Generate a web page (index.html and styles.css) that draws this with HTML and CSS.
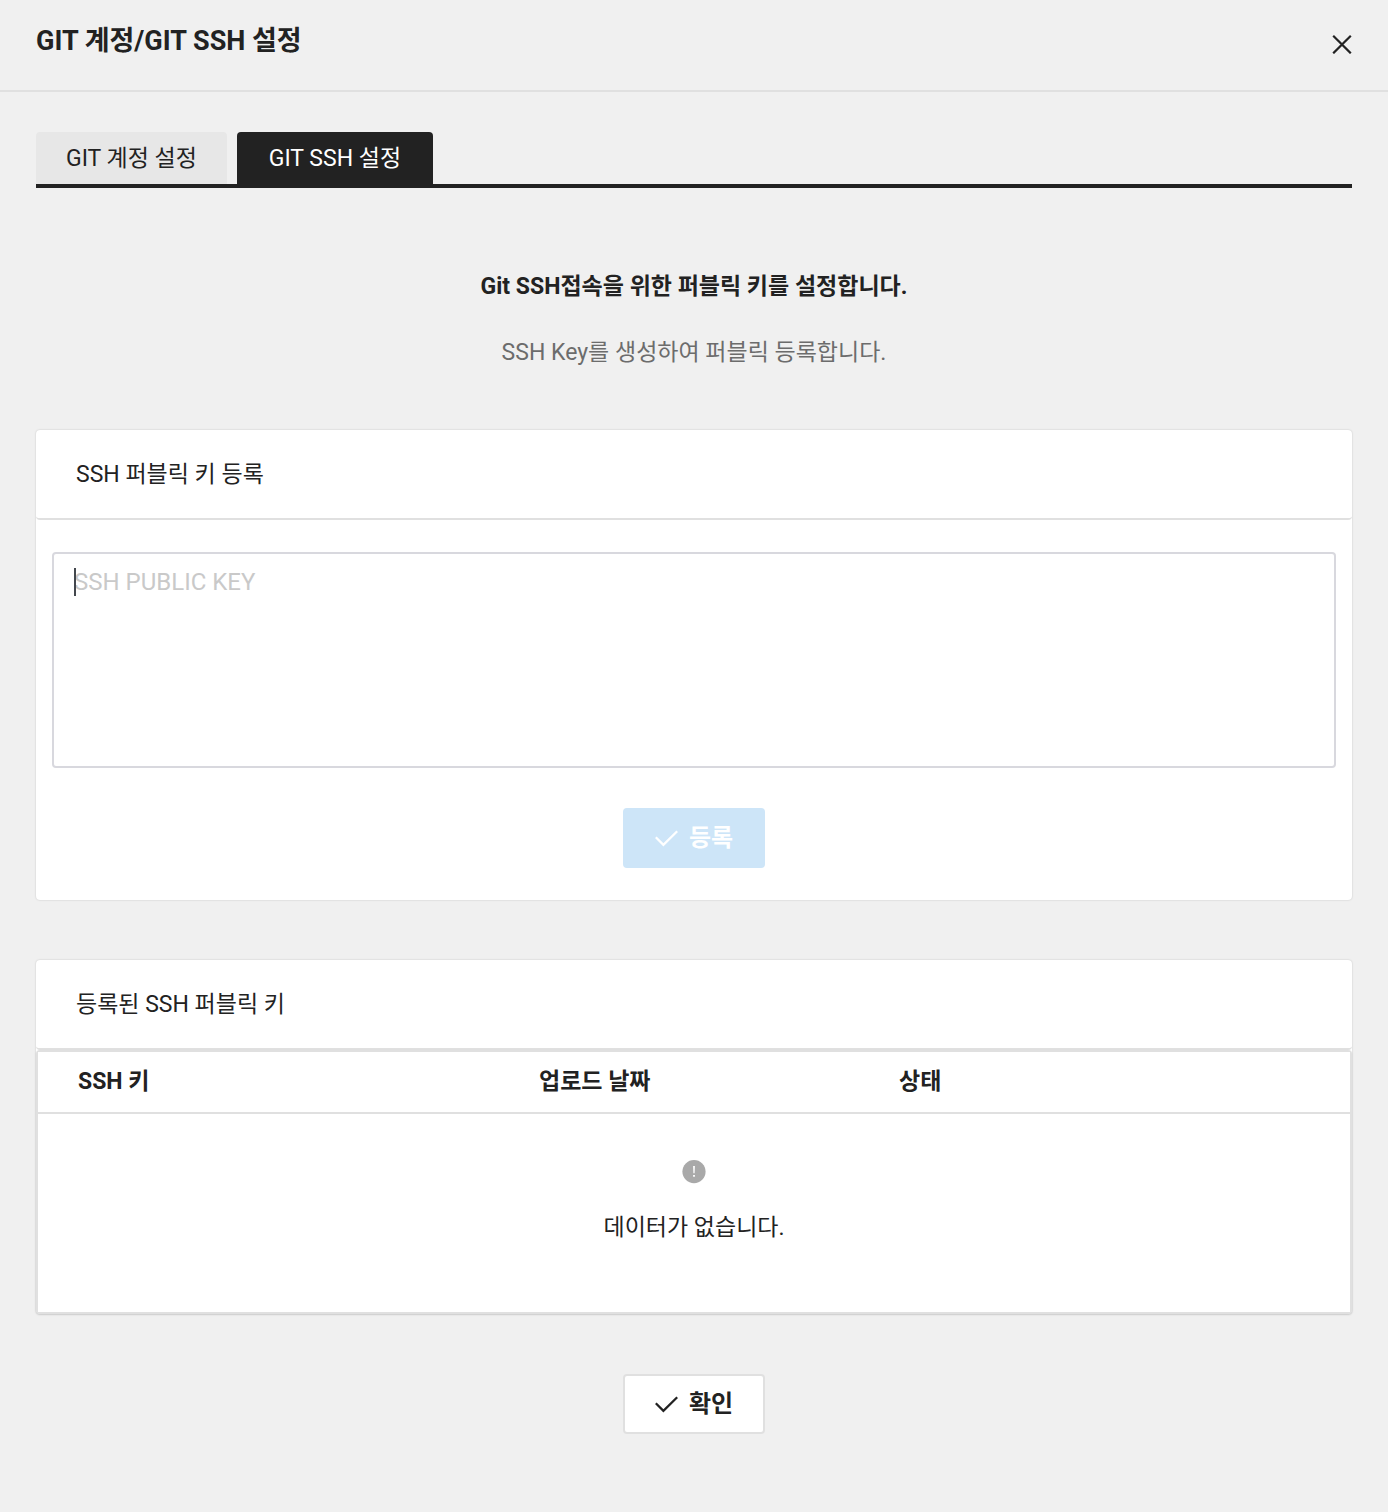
FILE: index.html
```html
<!DOCTYPE html>
<html lang="ko">
<head>
<meta charset="utf-8">
<meta name="viewport" content="width=device-width, initial-scale=1">
<title>GIT 계정/GIT SSH 설정</title>
<link rel="stylesheet" href="styles.css">
</head>
<body>
<header class="dialog-header">
  <h1 class="dialog-title">GIT 계정/GIT SSH 설정</h1>
  <button class="close-button" type="button" aria-label="닫기">
    <svg width="20" height="20" viewBox="0 0 20 20" fill="none" stroke="currentColor" stroke-width="2.2" aria-hidden="true"><path d="M1.2 1.7 18.8 19.3M18.8 1.7 1.2 19.3"/></svg>
  </button>
</header>
<main class="dialog-body">
  <div class="tabs" role="tablist">
    <button class="tab" type="button" role="tab" aria-selected="false">GIT 계정 설정</button>
    <button class="tab tab-active" type="button" role="tab" aria-selected="true">GIT SSH 설정</button>
  </div>

  <div class="intro">
    <p class="intro-title">Git SSH접속을 위한 퍼블릭 키를 설정합니다.</p>
    <p class="intro-text">SSH Key를 생성하여 퍼블릭 등록합니다.</p>
  </div>

  <section class="card">
    <h2 class="card-title"><label for="public-key">SSH 퍼블릭 키 등록</label></h2>
    <form class="key-form">
      <div class="key-field">
        <textarea id="public-key" class="key-input" placeholder="SSH PUBLIC KEY"></textarea>
        <span class="caret" aria-hidden="true"></span>
      </div>
      <button class="button button-primary" type="submit" disabled>
        <svg class="check" width="24" height="24" viewBox="0 0 24 24" fill="none" stroke="currentColor" stroke-width="2.3" aria-hidden="true"><path d="M.8 11.2 8.4 18.8 22.2 5.2"/></svg>
        <span>등록</span>
      </button>
    </form>
  </section>

  <section class="card">
    <h2 class="card-title">등록된 SSH 퍼블릭 키</h2>
    <div class="key-list">
      <table class="key-table">
        <thead>
          <tr><th class="col-key" scope="col">SSH 키</th><th class="col-date" scope="col">업로드 날짜</th><th scope="col">상태</th></tr>
        </thead>
        <tbody>
          <tr>
            <td colspan="3">
              <div class="empty">
                <svg width="24" height="24" viewBox="0 0 24 24" aria-hidden="true"><circle cx="12" cy="11.6" r="11.6" fill="#a9a9a9"/><path d="M11.1 6.1h1.8l-.3 7.2h-1.2zM11.1 14.9h1.8v1.8h-1.8z" fill="#fff"/></svg>
                <span>데이터가 없습니다.</span>
              </div>
            </td>
          </tr>
        </tbody>
      </table>
    </div>
  </section>

  <div class="actions">
    <button class="button button-outline" type="button">
      <svg class="check" width="24" height="24" viewBox="0 0 24 24" fill="none" stroke="currentColor" stroke-width="2.3" aria-hidden="true"><path d="M.8 11.2 8.4 18.8 22.2 5.2"/></svg>
      <span>확인</span>
    </button>
  </div>
</main>
</body>
</html>
```
FILE: styles.css
```css
* {
  box-sizing: border-box;
}

body {
  margin: 0;
  background: #f0f0f0;
  color: #222;
  font-family: Roboto, "Noto Sans CJK KR", sans-serif;
  font-size: 23px;
  line-height: 32px;
}

h1, h2, p {
  margin: 0;
}

button, textarea {
  font: inherit;
  color: inherit;
}

.dialog-header {
  display: flex;
  justify-content: space-between;
  align-items: flex-start;
  padding: 25px 36px 33px;
  border-bottom: 2px solid #e0e0e0;
}

.dialog-title {
  font-size: 27px;
  font-weight: 700;
  line-height: 32px;
}

.close-button {
  display: flex;
  padding: 9px 0 0;
  border: 0;
  background: none;
}

.dialog-body {
  padding: 40px 36px 78px;
}

.tabs {
  display: flex;
  gap: 10px;
  border-bottom: 4px solid #222;
}

.tab {
  height: 52px;
  padding: 2px 30px 0;
  border: 0;
  border-radius: 4px 4px 0 0;
  background: #e7e7e7;
}

.tab-active {
  min-width: 196px;
  background: #222;
  color: #fff;
}

.intro {
  display: flex;
  flex-direction: column;
  gap: 34px;
  padding: 83px 0 61px;
  text-align: center;
}

.intro-title {
  font-weight: 700;
}

.intro-text {
  color: #6c6c6c;
}

.card {
  border-radius: 4px;
  background: #fff;
  box-shadow: 0 0 2px rgba(0, 0, 0, 0.2);
}

.card + .card {
  margin-top: 60px;
}

.card-title {
  padding: 29px 40px 27px;
  border-bottom: 2px solid #e0e0e0;
  border-radius: 4px;
  font-size: 23px;
  font-weight: 400;
}

.key-form {
  display: flex;
  flex-direction: column;
  align-items: center;
  gap: 40px;
  padding: 32px 16px;
}

.key-field {
  position: relative;
  display: flex;
  width: 100%;
}

.key-input {
  width: 100%;
  height: 216px;
  padding: 12px 20px;
  border: 2px solid #d8d8de;
  border-radius: 4px;
  outline: 0;
  background: #fff;
  font-size: 24px;
  resize: none;
}

.key-input::placeholder {
  color: #c9c9c9;
}

.caret {
  position: absolute;
  top: 16px;
  left: 22px;
  width: 2px;
  height: 28px;
  background: #43474d;
}

.button {
  display: flex;
  align-items: center;
  gap: 10px;
  height: 60px;
  padding: 0 30px;
  border: 2px solid transparent;
  border-radius: 4px;
  font-size: 24px;
  font-weight: 700;
}

.button-primary {
  border-color: #cde5f8;
  background: #cde5f8;
  color: #fff;
}

.button-outline {
  border-color: #e0e0e0;
  background: #fff;
}

.key-list {
  padding: 2px;
  border-radius: 4px;
  background: #e0e0e0;
  box-shadow: 0 1px 2px rgba(0, 0, 0, 0.1);
}

.key-table {
  width: 100%;
  border-collapse: separate;
  border-spacing: 0;
  table-layout: fixed;
  background: #fff;
}

.key-table th {
  height: 62px;
  padding: 0 40px;
  border-bottom: 2px solid #e0e0e0;
  font-weight: 700;
  text-align: left;
}

.key-table td {
  height: 198px;
  padding: 0;
}

.col-key {
  width: 461px;
}

.col-date {
  width: 360px;
}

.empty {
  display: flex;
  flex-direction: column;
  align-items: center;
  gap: 28px;
  padding-bottom: 22px;
}

.actions {
  display: flex;
  justify-content: center;
  padding-top: 60px;
}
```
